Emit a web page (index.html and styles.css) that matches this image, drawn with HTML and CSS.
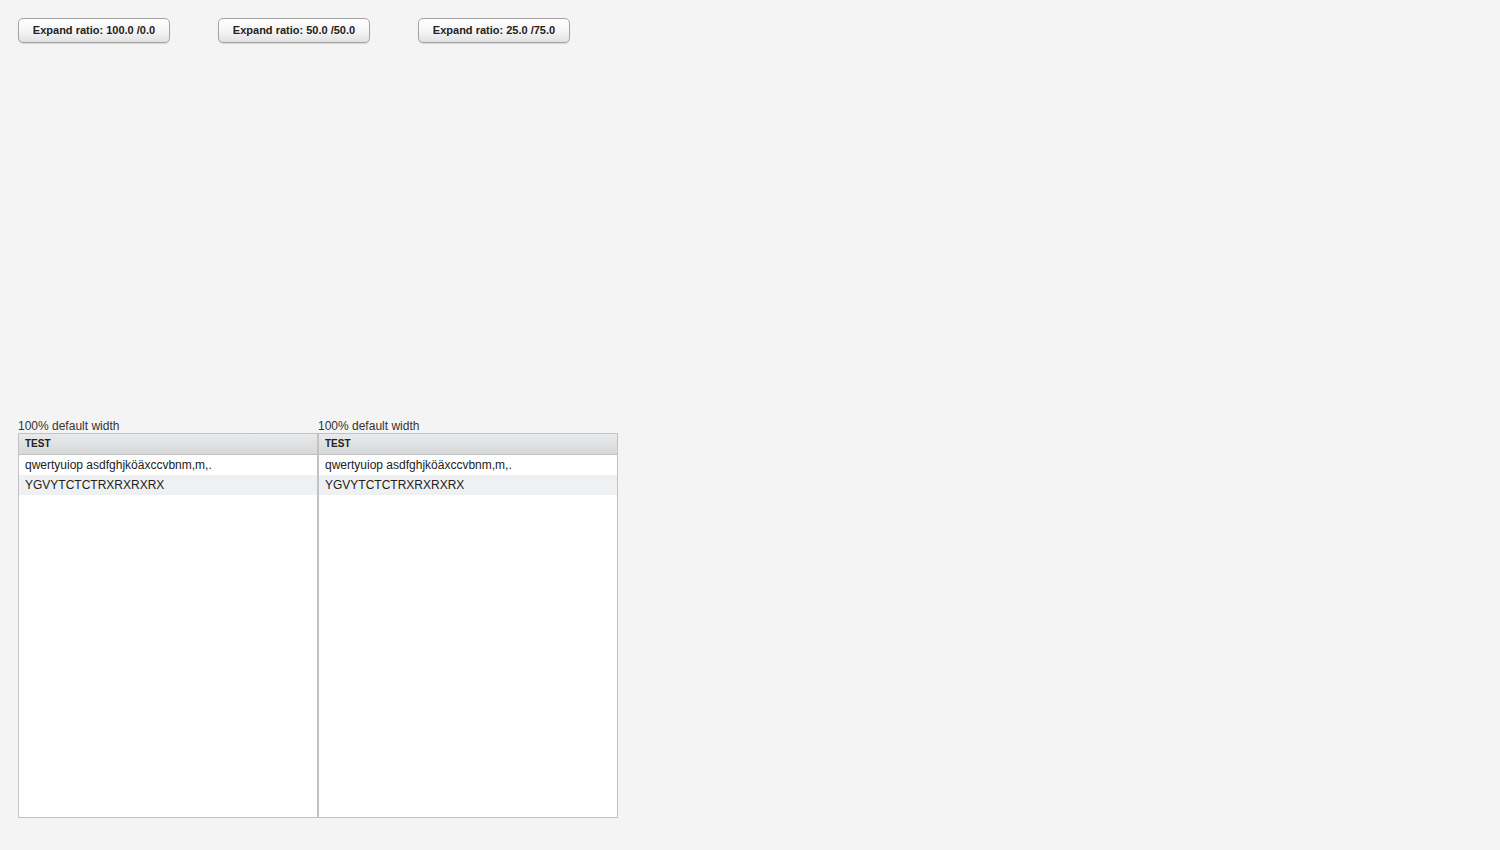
FILE: index.html
```html
<html>
<head>
  <title>Expand ratio test</title>
  <link rel="stylesheet" href="styles.css">
</head>
<body>
  <div class="buttons">
    <div class="slot"><button class="btn">Expand ratio: 100.0 /0.0</button></div>
    <div class="slot"><button class="btn">Expand ratio: 50.0 /50.0</button></div>
    <div class="slot"><button class="btn">Expand ratio: 25.0 /75.0</button></div>
  </div>
  <div class="tables">
    <div class="column">
      <div class="caption">100% default width</div>
      <div class="table">
        <div class="header">TEST</div>
        <div class="row">qwertyuiop asdfghjköäxccvbnm,m,.</div>
        <div class="row odd">YGVYTCTCTRXRXRXRX</div>
      </div>
    </div>
    <div class="column">
      <div class="caption">100% default width</div>
      <div class="table">
        <div class="header">TEST</div>
        <div class="row">qwertyuiop asdfghjköäxccvbnm,m,.</div>
        <div class="row odd">YGVYTCTCTRXRXRXRX</div>
      </div>
    </div>
  </div>
</body>
</html>
```

FILE: styles.css
```css
body {
  margin: 0;
  padding: 18px;
  background-color: #f4f4f4;
  font-family: "Liberation Sans", Arial, sans-serif;
  color: #222;
}
.buttons {
  display: flex;
}
.slot {
  width: 200px;
}
.btn {
  width: 152px;
  height: 25px;
  padding: 0 0 2px 0;
  border: 1px solid #a4a4a4;
  border-radius: 5px;
  background: linear-gradient(#ffffff, #f4f4f4 55%, #e2e2e2);
  box-shadow: 0 1px 1px rgba(0,0,0,0.12), inset 0 1px 0 #fff;
  font-family: "Liberation Sans", Arial, sans-serif;
  font-size: 11px;
  font-weight: bold;
  color: #222;
}
.tables {
  display: flex;
  margin-top: 376px;
}
.column {
  width: 300px;
}
.caption {
  font-size: 12px;
  height: 14px;
  line-height: 14px;
  color: #333;
}
.table {
  height: 383px;
  border: 1px solid #c2c2c2;
  background-color: #fff;
}
.header {
  height: 20px;
  line-height: 19px;
  padding-left: 6px;
  border-bottom: 1px solid #c2c2c2;
  background: linear-gradient(#e9eaeb, #d6d8da);
  font-size: 10px;
  font-weight: bold;
  color: #222;
}
.row {
  height: 20px;
  line-height: 20px;
  padding-left: 6px;
  font-size: 12px;
  color: #222;
}
.odd {
  background-color: #eff0f1;
}
```
